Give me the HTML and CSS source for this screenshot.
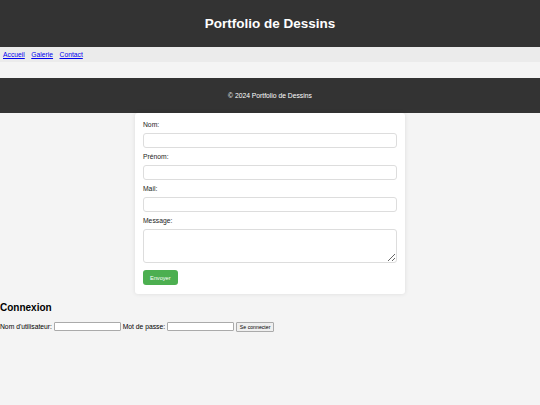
FILE: index.html
```html
<!DOCTYPE html>
<html lang="fr">
<head>
  <meta charset="UTF-8" />
  <title>Portfolio de Dessins</title>
  <link rel="stylesheet" href="styles.css">
</head>
<body>
  <header class="site-header">
    <h1>Portfolio de Dessins</h1>
  </header>

  <nav class="site-nav">
    <a href="#">Accueil</a>
    <a href="#">Galerie</a>
    <a href="#">Contact</a>
  </nav>

  <main class="gallery"></main>

  <footer class="site-footer">
    <p>&copy; 2024 Portfolio de Dessins</p>
  </footer>

  <form class="contact-form">
    <label for="nom">Nom:</label>
    <input type="text" id="nom">

    <label for="prenom">Prénom:</label>
    <input type="text" id="prenom">

    <label for="mail">Mail:</label>
    <input type="email" id="mail">

    <label for="message">Message:</label>
    <textarea id="message"></textarea>

    <button type="submit" class="send-btn">Envoyer</button>
  </form>

  <section class="login">
    <h2>Connexion</h2>
    <form class="login-form">
      Nom d'utilisateur: <input type="text" class="login-input">
      Mot de passe: <input type="password" class="login-input">
      <button type="submit" class="login-btn">Se connecter</button>
    </form>
  </section>
</body>
</html>
```

FILE: styles.css
```css
body {
  font-family: "Liberation Sans", Arial, sans-serif;
  font-size: 6.75px;
  margin: 0;
  padding: 0;
  background: #f4f4f4;
  color: #000;
}

.site-header {
  background: #333;
  color: #fff;
  height: 47px;
  display: flex;
  align-items: center;
  justify-content: center;
}

.site-header h1 {
  margin: 0;
  font-size: 13.5px;
  font-weight: bold;
}

.site-nav {
  background: #ebebeb;
  height: 15px;
  padding: 0 3px;
  display: flex;
  align-items: center;
  gap: 6.5px;
}

.site-nav a {
  color: #0000ee;
}

.gallery {
  height: 16px;
}

.site-footer {
  background: #333;
  color: #fff;
  height: 35px;
  display: flex;
  align-items: center;
  justify-content: center;
}

.site-footer p {
  margin: 0;
}

.contact-form {
  background: #fff;
  width: 270px;
  margin: 0 auto;
  padding: 8px 8px 9px;
  box-sizing: border-box;
  border-radius: 3px;
  box-shadow: 0 0 4px rgba(0, 0, 0, 0.1);
}

.contact-form label {
  display: block;
  line-height: 8px;
  margin-bottom: 4px;
  color: #222;
}

.contact-form input,
.contact-form textarea {
  display: block;
  width: 100%;
  height: 15px;
  box-sizing: border-box;
  margin: 0 0 5px;
  border: 1px solid #ddd;
  border-radius: 3px;
  font: inherit;
  padding: 2px 4px;
}

.contact-form textarea {
  height: 34px;
  margin-bottom: 7px;
}

.send-btn {
  display: block;
  background: #4caf50;
  color: #fff;
  border: none;
  border-radius: 3px;
  height: 15px;
  padding: 0 7px;
  font-family: inherit;
  font-size: 5.6px;
  cursor: pointer;
}

.login h2 {
  font-size: 10px;
  margin: 8.4px 0;
}

.login-form {
  margin: 0;
}

.login-input {
  width: 67px;
  height: 9px;
  box-sizing: border-box;
  border: 1px solid #aaa;
  border-radius: 1px;
  padding: 0 2px;
  font-size: 5.6px;
  vertical-align: middle;
}

.login-btn {
  height: 10px;
  padding: 0 3px;
  font-family: inherit;
  font-size: 5.2px;
  border: 1px solid #aaa;
  border-radius: 1px;
  background: #efefef;
  vertical-align: middle;
}
```
